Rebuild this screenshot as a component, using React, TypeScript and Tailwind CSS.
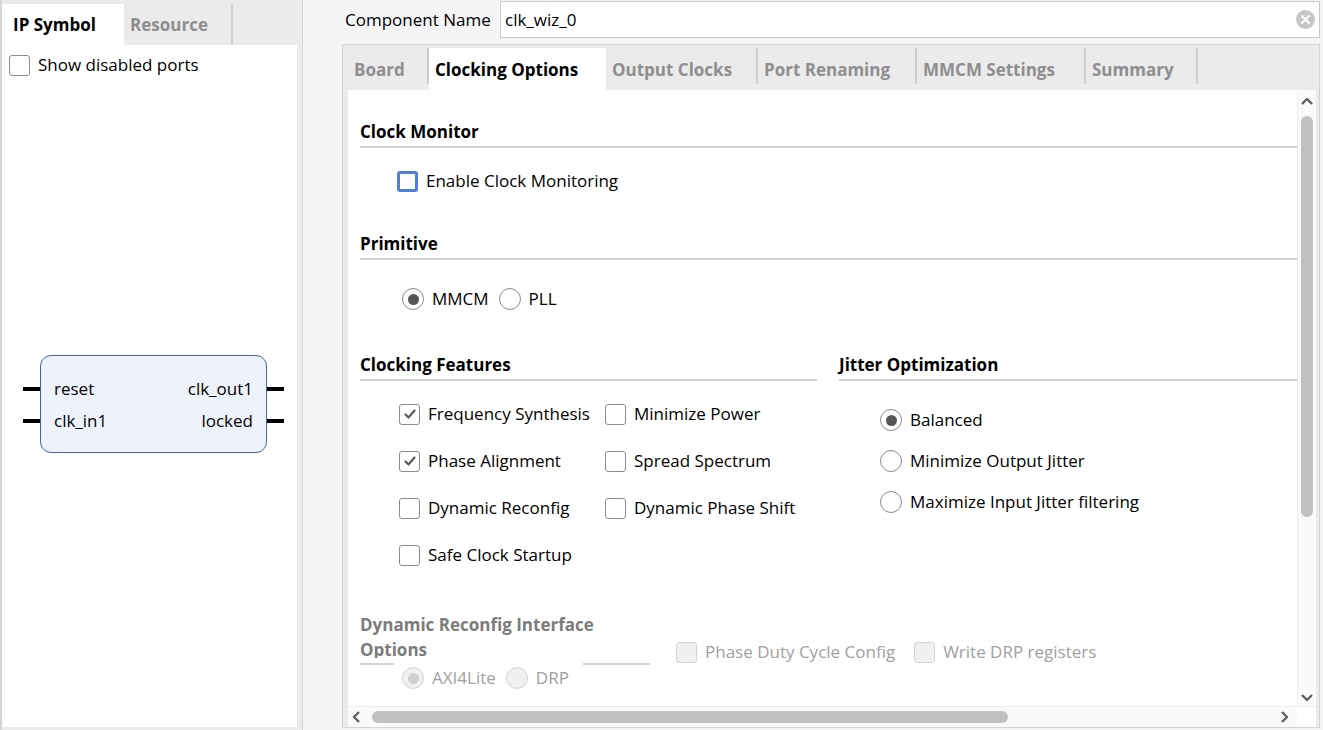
import React from "react";

// --- Small widgets ---
const CheckBox = ({
  checked = false,
  disabled = false,
  focus = false,
}: {
  checked?: boolean;
  disabled?: boolean;
  focus?: boolean;
}) => (
  <span
    className={`flex h-[21px] w-[21px] shrink-0 items-center justify-center rounded-[3px] ${
      focus
        ? "border-[3px] border-[#4f7fd6] bg-white"
        : disabled
        ? "border-[1.5px] border-[#d4d4d4] bg-[#f0f0f0]"
        : "border-[1.5px] border-[#8c8c8c] bg-white"
    }`}
  >
    {checked && (
      <svg width="14" height="14" viewBox="0 0 14 14">
        <polyline
          points="2.5,7.5 5.5,10.5 11.5,3.5"
          fill="none"
          stroke="#5a5a5a"
          strokeWidth="2.2"
          strokeLinecap="round"
          strokeLinejoin="round"
        />
      </svg>
    )}
  </span>
);

const Radio = ({
  checked = false,
  disabled = false,
}: {
  checked?: boolean;
  disabled?: boolean;
}) => (
  <span
    className={`flex h-[22px] w-[22px] shrink-0 items-center justify-center rounded-full border-[1.5px] ${
      disabled ? "border-[#d4d4d4] bg-[#f0f0f0]" : "border-[#8c8c8c] bg-white"
    }`}
  >
    {checked && (
      <span
        className={`h-[11px] w-[11px] rounded-full ${
          disabled ? "bg-[#d0d0d0]" : "bg-[#555555]"
        }`}
      />
    )}
  </span>
);

const SectionTitle = ({ children }: { children: React.ReactNode }) => (
  <div className="flex flex-col">
    <div className="text-[17px] font-bold leading-[22px] text-black">{children}</div>
    <div className="mt-[3px] h-[2px] bg-[#d2d2d2]" />
  </div>
);

const Chevron = ({ dir }: { dir: "up" | "down" | "left" | "right" }) => {
  const pts = {
    up: "2,9 7,4 12,9",
    down: "2,5 7,10 12,5",
    left: "9,2 4,7 9,12",
    right: "5,2 10,7 5,12",
  }[dir];
  return (
    <svg width="14" height="14" viewBox="0 0 14 14">
      <polyline
        points={pts}
        fill="none"
        stroke="#606060"
        strokeWidth="2.4"
        strokeLinejoin="round"
      />
    </svg>
  );
};

const tabs = [
  { label: "Board", w: "w-[81px]", sep: true },
  { label: "Clocking Options", w: "w-[177px]", active: true },
  { label: "Output Clocks", w: "w-[152px]", sep: true },
  { label: "Port Renaming", w: "w-[159px]", sep: true },
  { label: "MMCM Settings", w: "w-[169px]", sep: true },
  { label: "Summary", w: "w-[112px]", sep: true },
];

// --- Main Component ---
export default function App() {
  return (
    <div
      className="flex h-[730px] w-[1323px] overflow-hidden bg-[#f5f5f5] text-[17px] leading-[22px] text-black"
      style={{ fontFamily: '"Open Sans", "Noto Sans", sans-serif' }}
    >
      {/* Left panel: IP Symbol */}
      <div className="flex h-full w-[303px] shrink-0 flex-col border-l-2 border-r border-[#d6d6d6] bg-[#ebebeb] pb-[3px] pr-[5px] pt-[4px]">
        <div className="flex h-[41px] shrink-0 items-stretch">
          <div className="flex w-[122px] items-center bg-white pl-[11px] font-bold">
            IP Symbol
          </div>
          <div className="flex w-[109px] items-center border-r-2 border-[#cfcfcf] pl-[6px] font-bold text-[#8e8e8e]">
            Resource
          </div>
        </div>
        <div className="flex flex-1 flex-col bg-white pl-[7px] pt-[9px]">
          <div className="flex items-center gap-[8px]">
            <CheckBox />
            <span>Show disabled ports</span>
          </div>
          {/* symbol */}
          <div className="ml-[31px] mt-[279px] flex">
            <div className="relative flex h-[98px] w-[227px] justify-between rounded-[11px] border border-[#4a63a8] bg-[#eef3fb] px-[13px] py-[22px]">
              <div className="flex flex-col gap-[10px]">
                <span>reset</span>
                <span>clk_in1</span>
              </div>
              <div className="flex flex-col items-end gap-[10px]">
                <span>clk_out1</span>
                <span>locked</span>
              </div>
              <span className="absolute left-[-18px] top-[31px] h-[4px] w-[17px] bg-black" />
              <span className="absolute left-[-18px] top-[63px] h-[4px] w-[17px] bg-black" />
              <span className="absolute right-[-18px] top-[31px] h-[4px] w-[17px] bg-black" />
              <span className="absolute right-[-18px] top-[63px] h-[4px] w-[17px] bg-black" />
            </div>
          </div>
        </div>
      </div>

      {/* Right side */}
      <div className="flex flex-1 flex-col pb-[2px] pr-[3px] pt-[1px]">
        <div className="flex h-[37px] shrink-0 items-center">
          <span className="ml-[42px] w-[155px]">Component Name</span>
          <div className="flex h-full flex-1 items-center justify-between border border-[#c8c8c8] bg-white pl-[4px] pr-[4px]">
            <span>clk_wiz_0</span>
            <span className="flex h-[19px] w-[19px] items-center justify-center rounded-full bg-[#c6c6c6]">
              <svg width="9" height="9" viewBox="0 0 9 9">
                <path d="M1 1L8 8M8 1L1 8" stroke="white" strokeWidth="2" strokeLinecap="round" />
              </svg>
            </span>
          </div>
        </div>

        {/* Tab container */}
        <div className="ml-[39px] mt-[6px] flex flex-1 flex-col border border-[#d4d4d4] bg-[#ebebeb] pl-[5px] pr-[3px] pt-[3px]">
          <div className="flex h-[42px] shrink-0">
            {tabs.map((t) => (
              <div
                key={t.label}
                className={`flex ${t.w} items-center font-bold ${
                  t.active ? "bg-white pl-[6px] text-black" : "pl-[6px] text-[#8e8e8e]"
                }`}
              >
                <span className="flex-1 pt-[2px]">{t.label}</span>
                {t.sep && <span className="h-[36px] w-[2px] self-start bg-[#cdcdcd]" />}
              </div>
            ))}
          </div>

          {/* Content with scrollbars */}
          <div className="flex flex-1 flex-col bg-white">
            <div className="flex flex-1 overflow-hidden">
              <div className="flex flex-1 flex-col overflow-hidden pl-[12px] pt-[31px]">
                <SectionTitle>Clock Monitor</SectionTitle>
                <div className="ml-[37px] mt-[22px] flex items-center gap-[8px]">
                  <CheckBox focus />
                  <span>Enable Clock Monitoring</span>
                </div>

                <div className="mt-[41px]">
                  <SectionTitle>Primitive</SectionTitle>
                </div>
                <div className="ml-[42px] mt-[28px] flex items-center">
                  <Radio checked />
                  <span className="ml-[8px]">MMCM</span>
                  <span className="ml-[10px]">
                    <Radio />
                  </span>
                  <span className="ml-[8px]">PLL</span>
                </div>

                <div className="mt-[44px] flex gap-[22px]">
                  <div className="flex w-[457px] flex-col">
                    <SectionTitle>Clocking Features</SectionTitle>
                    <div className="ml-[39px] mt-[22px] grid grid-cols-[206px_1fr] gap-y-[25px]">
                      {[
                        ["Frequency Synthesis", true],
                        ["Minimize Power", false],
                        ["Phase Alignment", true],
                        ["Spread Spectrum", false],
                        ["Dynamic Reconfig", false],
                        ["Dynamic Phase Shift", false],
                        ["Safe Clock Startup", false],
                      ].map(([label, on]) => (
                        <div key={label as string} className="flex items-center gap-[8px]">
                          <CheckBox checked={on as boolean} />
                          <span className="whitespace-nowrap">{label}</span>
                        </div>
                      ))}
                    </div>
                  </div>
                  <div className="flex flex-1 flex-col">
                    <SectionTitle>Jitter Optimization</SectionTitle>
                    <div className="ml-[41px] mt-[28px] flex flex-col gap-[19px]">
                      {["Balanced", "Minimize Output Jitter", "Maximize Input Jitter filtering"].map(
                        (label, i) => (
                          <div key={label} className="flex items-center gap-[8px]">
                            <Radio checked={i === 0} />
                            <span>{label}</span>
                          </div>
                        )
                      )}
                    </div>
                  </div>
                </div>

                {/* Disabled group */}
                <div className="mt-[46px] flex items-start text-[#a0a0a0]">
                  <div className="flex w-[290px] shrink-0 flex-col">
                    <div className="h-[46px] overflow-hidden font-bold leading-[25px] text-[#7c7c7c]">
                      Dynamic Reconfig Interface
                      <br />
                      Options
                    </div>
                    <div className="mt-[5px] flex h-[2px] justify-between">
                      <span className="w-[34px] bg-[#d2d2d2]" />
                      <span className="w-[67px] bg-[#d2d2d2]" />
                    </div>
                    <div className="ml-[42px] mt-[2px] flex items-center">
                      <Radio checked disabled />
                      <span className="ml-[8px]">AXI4Lite</span>
                      <span className="ml-[10px]">
                        <Radio disabled />
                      </span>
                      <span className="ml-[8px]">DRP</span>
                    </div>
                  </div>
                  <div className="ml-[26px] mt-[29px] flex items-center gap-[8px]">
                    <CheckBox disabled />
                    <span>Phase Duty Cycle Config</span>
                  </div>
                  <div className="ml-[19px] mt-[29px] flex items-center gap-[8px]">
                    <CheckBox disabled />
                    <span>Write DRP registers</span>
                  </div>
                </div>
              </div>

              {/* Vertical scrollbar */}
              <div className="flex w-[19px] shrink-0 flex-col items-center border-l border-[#ededed] bg-[#fafafa] pt-[5px]">
                <Chevron dir="up" />
                <div className="mt-[7px] h-[401px] w-[12px] rounded-full bg-[#c1c1c1]" />
                <div className="flex-1" />
                <div className="pb-[2px]">
                  <Chevron dir="down" />
                </div>
              </div>
            </div>

            {/* Horizontal scrollbar */}
            <div className="flex h-[21px] shrink-0 items-center border-t border-[#ededed] bg-[#fafafa]">
              <span className="ml-[2px]">
                <Chevron dir="left" />
              </span>
              <div className="ml-[8px] h-[12px] w-[636px] rounded-full bg-[#c1c1c1]" />
              <div className="flex-1" />
              <span className="mr-[6px]">
                <Chevron dir="right" />
              </span>
              <div className="h-full w-[19px] bg-white" />
            </div>
          </div>
        </div>
      </div>
    </div>
  );
}
